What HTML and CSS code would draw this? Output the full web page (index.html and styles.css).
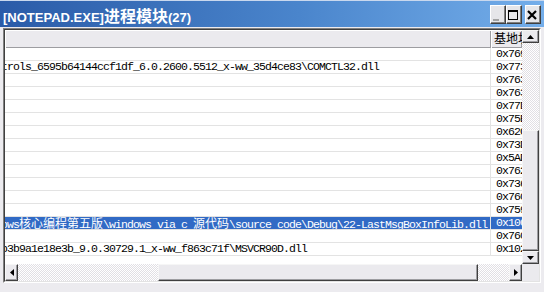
FILE: index.html
```html
<!DOCTYPE html>
<html>
<head>
<meta charset="utf-8">
<link rel="stylesheet" href="styles.css">
</head>
<body>
<div class="window">
  <div class="titlebar">
    <span class="title">[NOTEPAD.EXE]<span class="cjk">进程模块</span>(27)</span>
    <div class="caption-buttons">
      <span class="cbtn"><svg width="14" height="17" viewBox="0 0 14 17"><rect x="2" y="13" width="6" height="2" fill="#a3a3a3"/></svg></span>
      <span class="cbtn"><svg width="14" height="17" viewBox="0 0 14 17"><rect x="1.5" y="4.5" width="9" height="9" fill="none" stroke="#000"/><rect x="1" y="4" width="10" height="2" fill="#000"/></svg></span>
      <span class="cbtn close"><svg width="14" height="17" viewBox="0 0 14 17"><path d="M2 5 L10 13 M10 5 L2 13" stroke="#000" stroke-width="2.2" fill="none"/></svg></span>
    </div>
  </div>
  <div class="client">
    <div class="listview">
      <div class="lv-inner">
        <div class="view">
          <div class="header">
            <div class="hcol h1"></div>
            <div class="hcol h2">基地址</div>
          </div>
          <div class="row"><div class="c1"></div><div class="c2">0x76990000</div></div>
          <div class="row"><div class="c1"><span class="path">trols_6595b64144ccf1df_6.0.2600.5512_x-ww_35d4ce83\COMCTL32.dll</span></div><div class="c2">0x773F0000</div></div>
          <div class="row"><div class="c1"></div><div class="c2">0x76390000</div></div>
          <div class="row"><div class="c1"></div><div class="c2">0x763B0000</div></div>
          <div class="row"><div class="c1"></div><div class="c2">0x77DD0000</div></div>
          <div class="row"><div class="c1"></div><div class="c2">0x75E90000</div></div>
          <div class="row"><div class="c1"></div><div class="c2">0x62C20000</div></div>
          <div class="row"><div class="c1"></div><div class="c2">0x73D00000</div></div>
          <div class="row"><div class="c1"></div><div class="c2">0x5AD70000</div></div>
          <div class="row"><div class="c1"></div><div class="c2">0x76200000</div></div>
          <div class="row"><div class="c1"></div><div class="c2">0x73640000</div></div>
          <div class="row"><div class="c1"></div><div class="c2">0x76080000</div></div>
          <div class="row"><div class="c1"></div><div class="c2">0x75940000</div></div>
          <div class="row sel"><div class="c1"><span class="path">ows<span class="zh">核心编程第五版</span>\windows via c <span class="zh">源代码</span>\source code\Debug\22-LastMsgBoxInfoLib.dll</span></div><div class="c2">0x10000000</div></div>
          <div class="row"><div class="c1"></div><div class="c2">0x76060000</div></div>
          <div class="row"><div class="c1"><span class="path">b3b9a1e18e3b_9.0.30729.1_x-ww_f863c71f\MSVCR90D.dll</span></div><div class="c2">0x10200000</div></div>
        </div>
        <div class="vscroll">
          <div class="sbtn vbtn"><svg width="7" height="4" viewBox="0 0 7 4"><polygon points="3.5,0 7,4 0,4" fill="#000"/></svg></div>
          <div class="vtrack"><div class="sbtn vthumb"></div></div>
          <div class="sbtn vbtn"><svg width="7" height="4" viewBox="0 0 7 4"><polygon points="0,0 7,0 3.5,4" fill="#000"/></svg></div>
        </div>
        <div class="hscroll">
          <div class="sbtn hbtn"><svg width="4" height="7" viewBox="0 0 4 7"><polygon points="4,0 4,7 0,3.5" fill="#000"/></svg></div>
          <div class="htrack"><div class="sbtn hthumb"></div></div>
          <div class="sbtn hbtn"><svg width="4" height="7" viewBox="0 0 4 7"><polygon points="0,0 4,3.5 0,7" fill="#000"/></svg></div>
        </div>
        <div class="corner"></div>
      </div>
    </div>
  </div>
</div>
</body>
</html>
```
FILE: styles.css
```css
html, body {
  margin: 0;
  padding: 0;
  width: 544px;
  height: 292px;
  overflow: hidden;
}
body {
  font-family: "Liberation Mono", "Noto Sans CJK SC", monospace;
}
.window {
  width: 544px;
  height: 292px;
  display: flex;
  flex-direction: column;
  background: #ecebef;
}
.titlebar {
  height: 27px;
  flex: none;
  display: flex;
  align-items: center;
  padding: 0 3px 0 3px;
  background: linear-gradient(90deg, #2a5ba8 0%, #4a85cc 55%, #74aeea 100%);
  box-shadow: inset 0 1px #c9d8ee;
}
.title {
  color: #fff;
  font: bold 13px "Liberation Sans", "Noto Sans CJK SC", sans-serif;
  white-space: nowrap;
  padding-top: 2px;
}
.title .cjk {
  font-size: 16px;
}
.caption-buttons {
  margin-left: auto;
  display: flex;
  padding-top: 1px;
}
.cbtn {
  width: 16px;
  height: 19px;
  box-sizing: border-box;
  background: #e6e6e9;
  border: 1px solid;
  border-color: #fff #404040 #404040 #fff;
  box-shadow: inset -1px -1px #808080;
  display: flex;
}
.cbtn.close {
  margin-left: 3px;
}
.client {
  flex: 1;
  display: flex;
  padding: 1px 3px 9px 3px;
}
.listview {
  flex: 1;
  display: flex;
  border: 1px solid;
  border-color: #808080 #fff #fff #808080;
}
.lv-inner {
  flex: 1;
  display: grid;
  grid-template-columns: 1fr 17px;
  grid-template-rows: 1fr 17px;
  border: 1px solid;
  border-color: #404040 #e3e3e3 #e3e3e3 #404040;
  background: #fff;
  min-width: 0;
  min-height: 0;
}
.view {
  overflow: hidden;
  min-width: 0;
  display: flex;
  flex-direction: column;
  background: #fff;
}
.header {
  height: 18px;
  flex: none;
  display: flex;
  background: #ebeaee;
}
.hcol {
  height: 18px;
  box-sizing: border-box;
  box-shadow: inset 1px 1px #fff, inset -1px -1px #9d9da1;
  font: 12px/16px "Noto Sans CJK SC", sans-serif;
  color: #000;
  white-space: nowrap;
  overflow: hidden;
}
.h1 {
  width: 486px;
  flex: none;
}
.h2 {
  flex: 1;
  padding-left: 3px;
}
.row {
  height: 13px;
  flex: none;
  box-sizing: border-box;
  border-bottom: 1px solid #e3e3e3;
  display: flex;
  font-size: 11.5px;
  line-height: 12px;
  letter-spacing: -0.9px;
  white-space: nowrap;
  color: #000;
}
.row.sel {
  background: #316ac5;
  color: #fff;
}
.c1 {
  width: 486px;
  flex: none;
  box-sizing: border-box;
  border-right: 1px solid #e3e3e3;
  overflow: hidden;
}
.path {
  display: block;
  margin-left: -4px;
}
.zh {
  font-family: "Noto Sans CJK SC", sans-serif;
  font-size: 12px;
  letter-spacing: 0;
}
.c2 {
  flex: 1;
  min-width: 0;
  padding-left: 5px;
  overflow: hidden;
}
.sbtn {
  box-sizing: border-box;
  background: #ebeaee;
  border: 1px solid;
  border-color: #f6f6f6 #404040 #404040 #f6f6f6;
  box-shadow: inset -1px -1px #9d9da1;
  display: flex;
  align-items: center;
  justify-content: center;
}
.vscroll {
  display: flex;
  flex-direction: column;
  background: repeating-conic-gradient(#ffffff 0 25%, #e1dfe4 0 50%) 0 0 / 2px 2px;
}
.vbtn {
  height: 13px;
  flex: none;
}
.vtrack {
  flex: 1;
  display: flex;
  flex-direction: column;
  justify-content: flex-end;
}
.vthumb {
  height: 121px;
  flex: none;
}
.hscroll {
  display: flex;
  background: repeating-conic-gradient(#ffffff 0 25%, #e1dfe4 0 50%) 0 0 / 2px 2px;
}
.hbtn {
  width: 13px;
  flex: none;
}
.htrack {
  flex: 1;
  display: flex;
}
.hthumb {
  margin-left: 140px;
  width: 320px;
  flex: none;
}
.corner {
  background: #ebeaee;
}
```
